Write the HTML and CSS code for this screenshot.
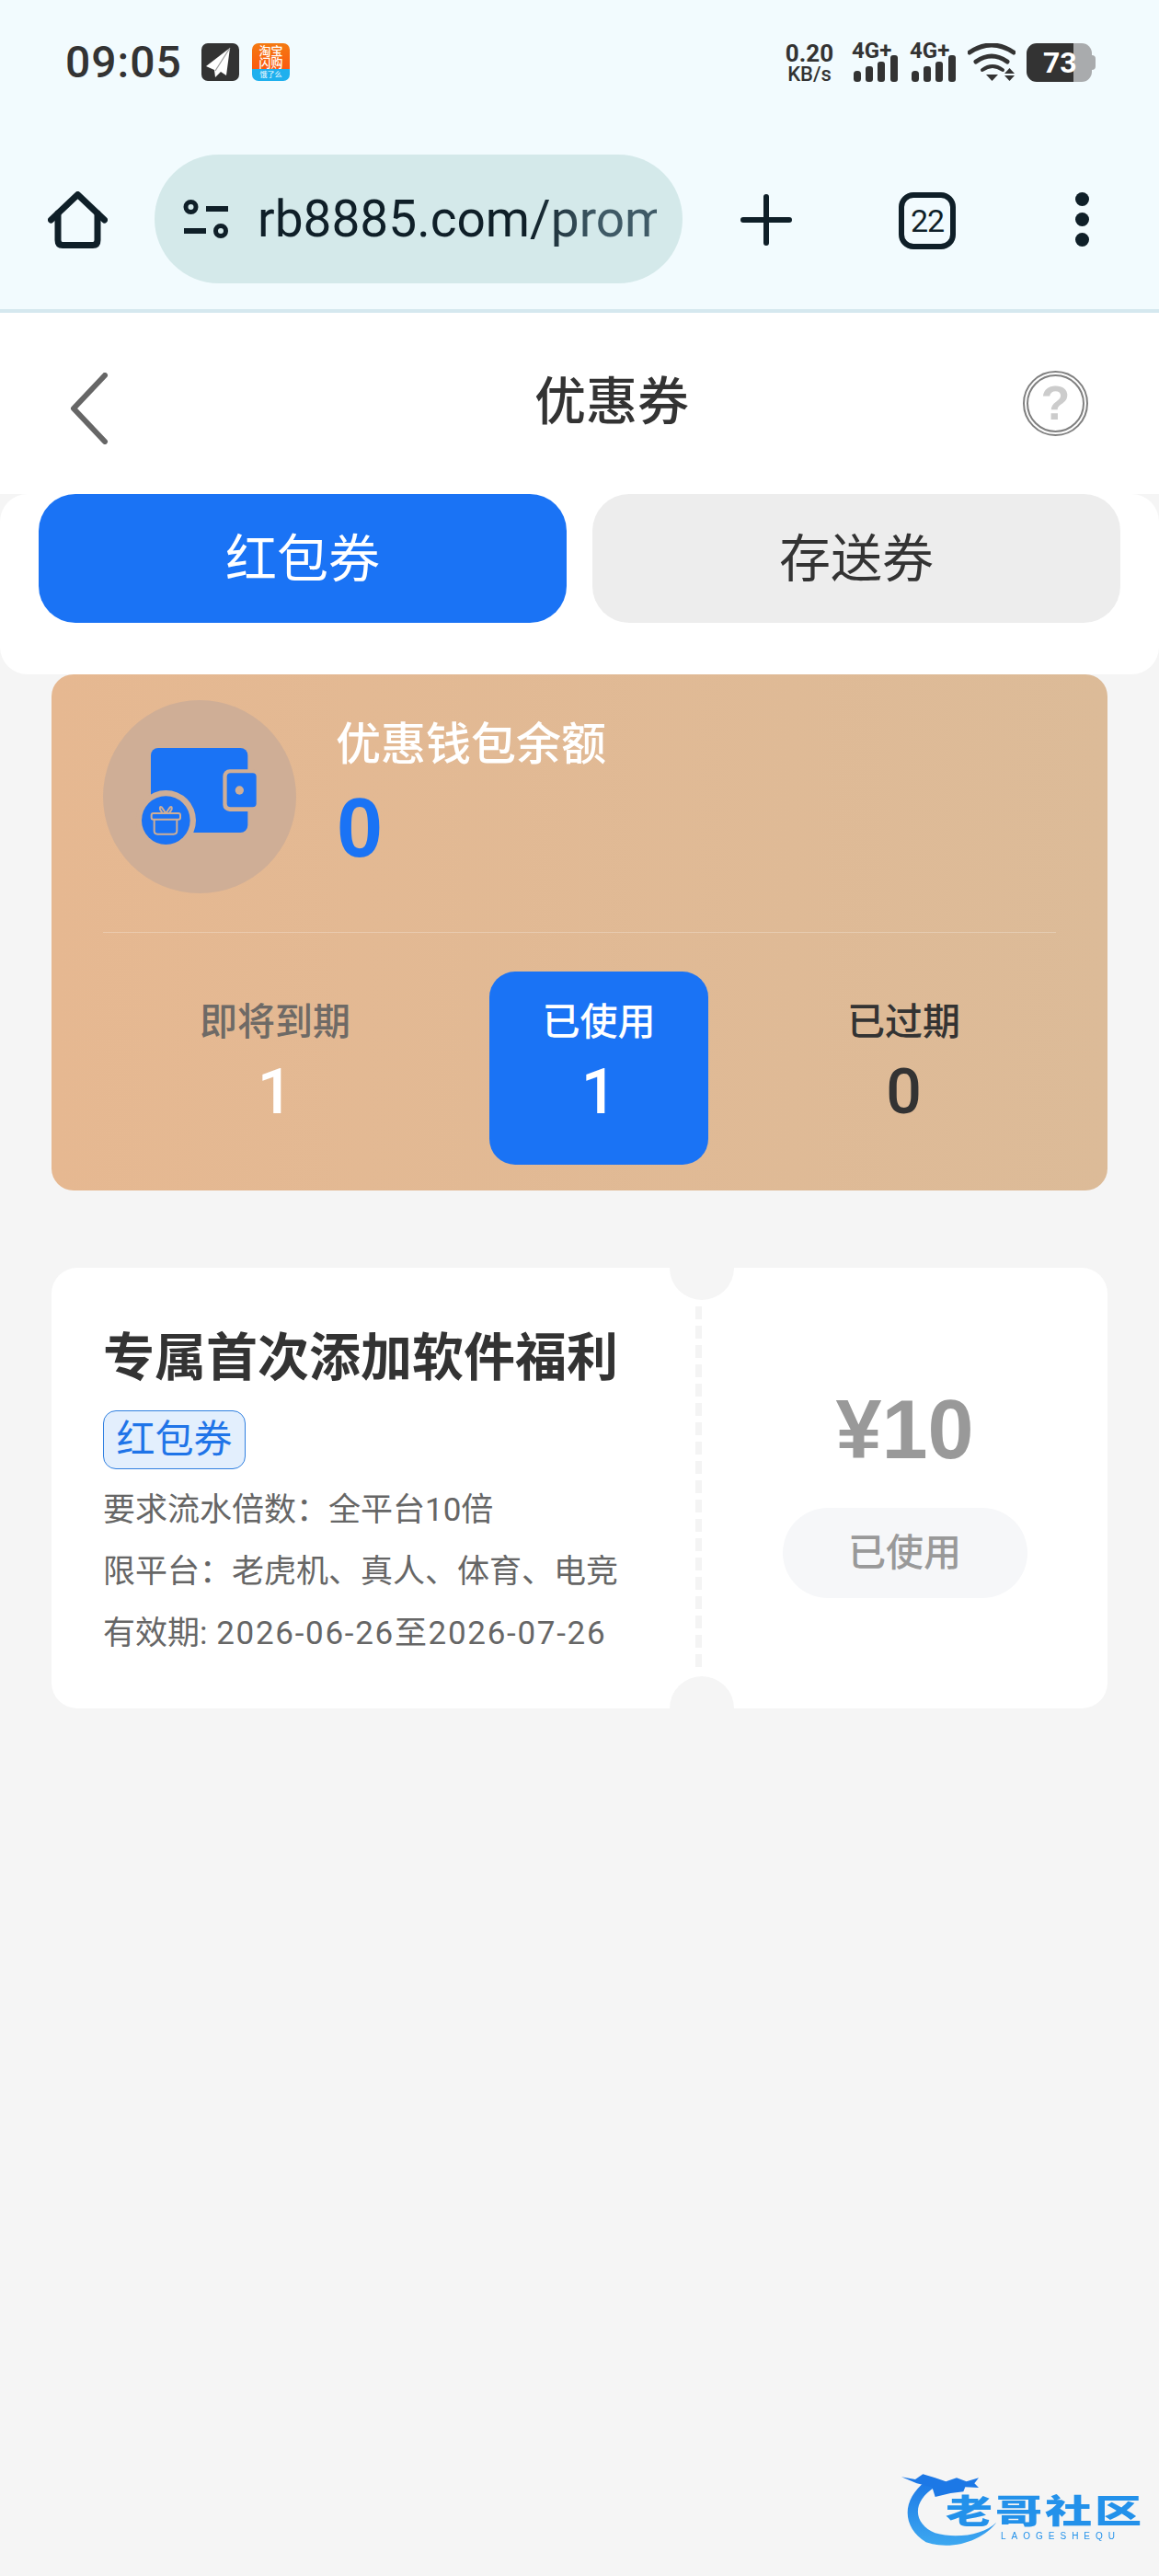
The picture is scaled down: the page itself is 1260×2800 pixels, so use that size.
FILE: index.html
```html
<!DOCTYPE html>
<html lang="zh-CN">
<head>
  <meta charset="UTF-8">
  <meta name="viewport" content="width=device-width, initial-scale=1.0">
  <title>优惠券</title>
  <link rel="stylesheet" href="styles.css">
</head>
<body>

  <!-- 浏览器顶部 -->
  <div class="chrome">
    <div class="status-bar">
      <div class="status-left">
        <span class="time">09:05</span>
        <svg class="app-icon plane" width="41" height="41" viewBox="0 0 41 41">
          <rect width="41" height="41" rx="7" fill="#333"/>
          <path d="M31 5 L5 25 L14 29 L15 37 L21 31 L27 35 Z" fill="#fff"/>
          <path d="M31 5 L15 30" stroke="#999" stroke-width="1.2"/>
        </svg>
        <div class="app-icon taobao">
          <div class="taobao-top">淘宝<br>闪购</div>
          <div class="taobao-bottom">饿了么</div>
        </div>
      </div>
      <div class="status-right">
        <div class="net-speed"><span>0.20</span><span class="unit">KB/s</span></div>
        <svg class="signal" width="50" height="50" viewBox="0 -8 50 50">
          <text x="0" y="16" class="signal-text">4G+</text>
          <rect x="2" y="30" width="8" height="12" rx="3.5"/>
          <rect x="15" y="25" width="8" height="17" rx="3"/>
          <rect x="28" y="20" width="8" height="22" rx="3"/>
          <rect x="42" y="13" width="8" height="29" rx="3"/>
        </svg>
        <svg class="signal" width="50" height="50" viewBox="0 -8 50 50">
          <text x="0" y="16" class="signal-text">4G+</text>
          <rect x="2" y="30" width="8" height="12" rx="3.5"/>
          <rect x="15" y="25" width="8" height="17" rx="3"/>
          <rect x="28" y="20" width="8" height="22" rx="3"/>
          <rect x="42" y="13" width="8" height="29" rx="3"/>
        </svg>
        <svg class="wifi" width="52" height="42" viewBox="0 0 52 42">
          <path d="M2 10 Q26 -6 50 10" fill="none" stroke="#333" stroke-width="5" stroke-linecap="round"/>
          <path d="M9 20 Q26 8 43 20" fill="none" stroke="#333" stroke-width="5" stroke-linecap="round"/>
          <path d="M16 29 Q27 21 38 29" fill="none" stroke="#333" stroke-width="4" stroke-linecap="round"/>
          <polygon points="20,34 33,34 26.5,41" fill="#333"/>
          <polygon points="40,33 51,33 45.5,27" fill="#333"/>
          <polygon points="40,35 51,35 45.5,41" fill="#333"/>
        </svg>
        <div class="battery"><span>73</span></div>
      </div>
    </div>

    <div class="toolbar">
      <svg class="home-icon" width="65" height="62" viewBox="0 0 65 62">
        <path d="M3.5 31 L32.5 3.5 L61.5 31" fill="none" stroke="#0f1f28" stroke-width="7" stroke-linecap="round" stroke-linejoin="round"/>
        <path d="M11 24 V53 Q11 58.5 16 58.5 H49 Q54 58.5 54 53 V24" fill="none" stroke="#0f1f28" stroke-width="7" stroke-linecap="round"/>
      </svg>
      <div class="url-bar">
        <svg width="50" height="42" viewBox="0 0 50 42">
          <circle cx="8.5" cy="8" r="5.5" fill="none" stroke="#0f1f28" stroke-width="5"/>
          <rect x="25" y="7" width="24" height="6" fill="#0f1f28"/>
          <rect x="1" y="31" width="24" height="6" fill="#0f1f28"/>
          <circle cx="41" cy="34" r="5.5" fill="none" stroke="#0f1f28" stroke-width="5"/>
        </svg>
        <div class="url-text">rb8885.com/prom</div>
      </div>
      <svg class="plus-icon" width="56" height="56" viewBox="0 0 56 56">
        <path d="M28 3 V53 M3 28 H53" stroke="#0f1f28" stroke-width="6" stroke-linecap="round"/>
      </svg>
      <div class="tab-count">22</div>
      <div class="more-icon"><i></i><i></i><i></i></div>
    </div>
  </div>

  <!-- 页面标题 -->
  <div class="page-header">
    <svg class="back-icon" width="42" height="78" viewBox="0 0 42 78">
      <path d="M38 3 L4 39 L38 75" fill="none" stroke="#666" stroke-width="6" stroke-linecap="round" stroke-linejoin="round"/>
    </svg>
    <h1 class="page-title">优惠券</h1>
    <div class="help-icon">?</div>
  </div>

  <div class="tabs">
    <div class="tab tab-active">红包券</div>
    <div class="tab">存送券</div>
  </div>

  <!-- 钱包卡片 -->
  <div class="wallet-card">
    <div class="wallet-head">
      <svg class="wallet-icon" width="210" height="210" viewBox="66 64 630 630">
        <circle cx="381" cy="379" r="315" fill="#cfae96"/>
        <rect x="222" y="220" width="316" height="276" rx="24" fill="#1a73f5"/>
        <rect x="457" y="290" width="122" height="137" rx="22" fill="#cfae96"/>
        <rect x="470" y="302" width="96" height="111" rx="12" fill="#1a73f5"/>
        <circle cx="511" cy="358" r="14" fill="#cfae96"/>
        <circle cx="271" cy="456" r="98" fill="#cfae96"/>
        <circle cx="271" cy="456" r="79" fill="#1a73f5"/>
        <rect x="224" y="433" width="94" height="20" rx="6" fill="none" stroke="#cfae96" stroke-width="6"/>
        <path d="M233 453 V490 Q233 501 244 501 H296 Q307 501 307 490 V453" fill="none" stroke="#cfae96" stroke-width="6"/>
        <path d="M271 433 L258 414 Q250 408 252 420 L260 433 M271 433 L284 414 Q292 408 290 420 L282 433" fill="none" stroke="#cfae96" stroke-width="6"/>
      </svg>
      <div class="wallet-info">
        <div class="wallet-label">优惠钱包余额</div>
        <div class="wallet-value">0</div>
      </div>
    </div>
    <div class="wallet-divider"></div>
    <div class="wallet-stats">
      <div class="stat">
        <div class="stat-label stat-label-muted">即将到期</div>
        <div class="stat-num stat-num-white">1</div>
      </div>
      <div class="stat stat-active">
        <div class="stat-label">已使用</div>
        <div class="stat-num">1</div>
      </div>
      <div class="stat">
        <div class="stat-label">已过期</div>
        <div class="stat-num">0</div>
      </div>
    </div>
  </div>

  <!-- 优惠券 -->
  <div class="coupon">
    <div class="coupon-main">
      <div class="coupon-title">专属首次添加软件福利</div>
      <div class="coupon-tag">红包券</div>
      <div class="coupon-lines">
        <div>要求流水倍数：全平台10倍</div>
        <div>限平台：老虎机、真人、体育、电竞</div>
        <div>有效期: <span class="coupon-date">2026-06-26至2026-07-26</span></div>
      </div>
    </div>
    <div class="coupon-side">
      <div class="coupon-price">¥10</div>
      <div class="coupon-btn">已使用</div>
    </div>
  </div>

  <!-- 水印 -->
  <div class="watermark">
    <svg width="300" height="140" viewBox="0 0 900 420">
      <defs>
        <linearGradient id="logoBlue" x1="0" y1="0" x2="0" y2="1">
          <stop offset="0" stop-color="#1c78e6"/>
          <stop offset="1" stop-color="#3da8f0"/>
        </linearGradient>
      </defs>
      <path d="M140 110 C60 170 60 260 140 310 C230 340 330 300 370 245 C330 285 240 300 170 280 C100 250 90 180 170 130 Z" fill="url(#logoBlue)"/>
      <path d="M60 97 L105 105 L130 88 L170 100 L205 112 L240 100 L272 112 L312 100 L298 118 L312 132 L268 130 L262 145 L220 150 L170 162 L160 130 L110 118 Z" fill="#1c78e6"/>
    </svg>
    <div class="watermark-name">老哥社区</div>
    <div class="watermark-sub">LAOGESHEQU</div>
  </div>

</body>
</html>
```

FILE: styles.css
```css
* {
  box-sizing: border-box;
}
body {
  position: relative;
  margin: 0;
  width: 1260px;
  height: 2800px;
  overflow: hidden;
  background-color: #f5f5f5;
  font-family: Roboto, "Noto Sans CJK SC", sans-serif;
  color: #333;
}

/* 浏览器顶部 */
.chrome {
  height: 340px;
  background-color: #f2fbfe;
  border-bottom: 4px solid #d5e8ef;
}
.status-bar {
  display: flex;
  justify-content: space-between;
  height: 168px;
  padding: 47px 73px 0 71px;
}
.status-left {
  display: flex;
  align-items: flex-start;
}
.time {
  width: 148px;
  font-size: 48px;
  font-weight: 500;
  line-height: 42px;
  letter-spacing: 1px;
  color: #333;
}
.taobao {
  display: flex;
  flex-direction: column;
  width: 41px;
  height: 41px;
  margin-left: 14px;
  border-radius: 7px;
  overflow: hidden;
  text-align: center;
  color: #fff;
}
.taobao-top {
  height: 28px;
  padding-top: 2px;
  background: linear-gradient(#f47a12, #fb5a10);
  font-size: 13px;
  font-weight: 500;
  line-height: 13px;
}
.taobao-bottom {
  flex: 1;
  background-color: #1fb0ee;
  font-size: 8px;
  line-height: 13px;
}
.status-right {
  display: flex;
  align-items: flex-start;
}
.net-speed {
  display: flex;
  flex-direction: column;
  align-items: center;
  width: 52px;
  margin-right: 20px;
  font-size: 26px;
  font-weight: 700;
  line-height: 22px;
}
.net-speed .unit {
  margin-top: 1px;
  font-size: 22px;
  font-weight: 500;
}
.signal {
  margin: -8px 13px 0 0;
}
.signal rect {
  fill: #333;
}
.signal-text {
  font-family: Roboto, sans-serif;
  font-size: 24px;
  font-weight: 700;
  fill: #333;
}
.wifi {
  margin-right: 12px;
}
.battery {
  position: relative;
  width: 71px;
  height: 42px;
  border-radius: 11px;
  background: linear-gradient(90deg, #333 51px, #a9abad 51px);
  color: #fff;
  font-size: 32px;
  font-weight: 700;
  line-height: 42px;
  padding-left: 18px;
}
.battery::after {
  content: "";
  position: absolute;
  top: 13px;
  right: -4px;
  width: 4px;
  height: 16px;
  border-radius: 0 4px 4px 0;
  background-color: #a9abad;
}

.toolbar {
  display: flex;
  align-items: center;
  height: 140px;
  padding-left: 52px;
  color: #0f1f28;
}
.home-icon {
  margin: 2px 51px 0 0;
}
.url-bar {
  display: flex;
  align-items: center;
  width: 574px;
  height: 140px;
  padding-left: 31px;
  border-radius: 70px;
  background-color: #d4e9ea;
}
.url-text {
  width: 434px;
  margin-left: 31px;
  overflow: hidden;
  white-space: nowrap;
  font-size: 55px;
  line-height: 70px;
  background: linear-gradient(90deg, #0f1f28 68%, #3f5a66 85%);
  -webkit-background-clip: text;
  background-clip: text;
  color: transparent;
}
.plus-icon {
  margin: 2px 0 0 63px;
}
.tab-count {
  width: 62px;
  height: 62px;
  margin: 4px 0 0 116px;
  border: 6px solid #0f1f28;
  border-radius: 16px;
  font-size: 34px;
  line-height: 50px;
  text-align: center;
  letter-spacing: -1px;
}
.more-icon {
  display: flex;
  flex-direction: column;
  gap: 7px;
  margin: 0 0 0 130px;
}
.more-icon i {
  display: block;
  width: 15px;
  height: 15px;
  border-radius: 50%;
  background-color: #0f1f28;
}

/* 页面标题 */
.page-header {
  display: flex;
  align-items: center;
  height: 197px;
  padding: 0 77px 0 76px;
  background-color: #fff;
}
.back-icon {
  margin-top: 10px;
}
.page-title {
  flex: 1;
  margin: 0 0 4px;
  padding-left: 100px;
  font-size: 56px;
  font-weight: 500;
  line-height: 70px;
  text-align: center;
  color: #333;
}
.help-icon {
  width: 71px;
  height: 71px;
  border: 6px double #808080;
  border-radius: 50%;
  font-family: "Liberation Sans", sans-serif;
  font-size: 52px;
  font-weight: 700;
  line-height: 58px;
  text-align: center;
  color: #ccc;
}

.tabs {
  display: flex;
  gap: 28px;
  height: 196px;
  padding-left: 42px;
  border-radius: 30px;
  background-color: #fff;
}
.tab {
  width: 574px;
  height: 140px;
  border-radius: 40px;
  background-color: #ededed;
  font-size: 56px;
  line-height: 142px;
  text-align: center;
  color: #333;
}
.tab-active {
  background-color: #1a73f5;
  color: #fff;
}

/* 钱包卡片 */
.wallet-card {
  height: 561px;
  margin: 0 56px;
  padding: 28px 56px;
  border-radius: 24px;
  background: linear-gradient(90deg, #e6b891, #dcbb98);
}
.wallet-head {
  display: flex;
}
.wallet-info {
  margin-left: 43px;
  padding-top: 19px;
}
.wallet-label {
  font-size: 49px;
  font-weight: 500;
  line-height: 60px;
  color: #fff;
}
.wallet-value {
  margin-top: 15px;
  margin-left: 1px;
  font-family: "Liberation Sans", sans-serif;
  font-size: 90px;
  font-weight: 700;
  line-height: 90px;
  color: #1a73f5;
}
.wallet-divider {
  height: 1px;
  margin-top: 42px;
  background-color: rgba(255, 255, 255, 0.25);
}
.wallet-stats {
  display: grid;
  grid-template-columns: 374px 238px 333px;
  column-gap: 46px;
  margin-top: 42px;
}
.stat {
  height: 210px;
  padding-top: 27px;
  border-radius: 28px;
  text-align: center;
}
.stat-active {
  background-color: #1a73f5;
  color: #fff;
}
.stat-label {
  font-size: 41px;
  font-weight: 500;
  line-height: 56px;
}
.stat-label-muted {
  color: #6e6a66;
}
.stat-num {
  margin-top: 14px;
  font-size: 68px;
  font-weight: 500;
  line-height: 68px;
}
.stat-num-white {
  color: #fff;
}

/* 优惠券 */
.coupon {
  position: relative;
  display: flex;
  height: 479px;
  margin: 84px 56px 0;
  border-radius: 28px;
  background-color: #fff;
}
.coupon::before,
.coupon::after {
  content: "";
  position: absolute;
  left: 672px;
  width: 70px;
  height: 35px;
  background-color: #f5f5f5;
}
.coupon::before {
  top: 0;
  border-radius: 0 0 35px 35px;
}
.coupon::after {
  bottom: 0;
  border-radius: 35px 35px 0 0;
}
.coupon-main {
  position: relative;
  width: 707px;
  padding: 63px 0 0 56px;
}
.coupon-main::after {
  content: "";
  position: absolute;
  top: 42px;
  right: 0;
  width: 7px;
  height: 395px;
  background: repeating-linear-gradient(#f4f4f4 0, #f4f4f4 14px, transparent 14px, transparent 21px);
}
.coupon-title {
  font-size: 56px;
  font-weight: 700;
  line-height: 70px;
  white-space: nowrap;
  color: #333;
}
.coupon-tag {
  width: 155px;
  height: 64px;
  margin-top: 22px;
  border: 1px solid #2f7fe0;
  border-radius: 14px;
  background-color: #e3effd;
  font-size: 42px;
  line-height: 62px;
  text-align: center;
  color: #1f74e8;
}
.coupon-lines {
  margin-top: 11px;
  font-size: 35px;
  line-height: 67px;
  white-space: nowrap;
  color: #666;
}
.coupon-date {
  margin-left: 1px;
  letter-spacing: 1.7px;
}
.coupon-side {
  display: flex;
  flex-direction: column;
  align-items: center;
  flex: 1;
  padding-top: 131px;
}
.coupon-price {
  font-family: "Liberation Sans", sans-serif;
  font-size: 90px;
  font-weight: 700;
  line-height: 90px;
  color: #999;
}
.coupon-btn {
  width: 266px;
  height: 98px;
  margin-top: 40px;
  border-radius: 49px;
  background-color: #f6f7f9;
  font-size: 41px;
  font-weight: 500;
  line-height: 98px;
  text-align: center;
  color: #999;
}

/* 水印 */
.watermark {
  position: absolute;
  right: 0;
  bottom: 0;
  width: 300px;
  height: 140px;
  filter: blur(0.7px);
}
.watermark-name {
  position: absolute;
  left: 68px;
  top: 49px;
  font-size: 36px;
  font-weight: 900;
  line-height: 44px;
  letter-spacing: 2px;
  white-space: nowrap;
  color: #2391ea;
  transform: scaleX(1.42);
  transform-origin: left center;
}
.watermark-sub {
  position: absolute;
  left: 128px;
  top: 92px;
  font-family: "Liberation Sans", sans-serif;
  font-size: 10px;
  line-height: 10px;
  letter-spacing: 6px;
  white-space: nowrap;
  color: #2391ea;
}
```
